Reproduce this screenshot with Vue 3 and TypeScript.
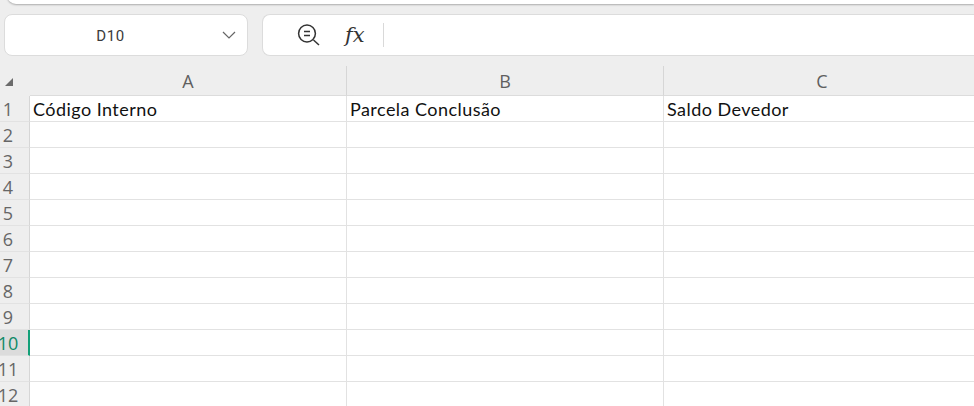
<script setup lang="ts">
const columns = ['A', 'B', 'C']
const headerCells = ['Código Interno', 'Parcela Conclusão', 'Saldo Devedor']
const rows = Array.from({ length: 12 }, (_, i) => i + 1)
const activeRow = 10
</script>

<template>
  <div class="app">
    <div class="ribbon"></div>
    <div class="bar">
      <div class="namebox">
        <span class="ref">D10</span>
        <svg class="chev" width="14" height="8" viewBox="0 0 14 8"><path d="M1 1l6 6 6-6" fill="none" stroke="#666" stroke-width="1.2" /></svg>
      </div>
      <div class="formula">
        <svg class="zoom" width="24" height="24" viewBox="0 0 24 24" fill="none" stroke="#333" stroke-width="1.5">
          <circle cx="10" cy="10.5" r="8.4" />
          <path d="M16.5 17l5.5 5" />
          <path d="M7 8.5h6M7 12.5h6" stroke-width="1.4" />
        </svg>
        <span class="fx">fx</span>
        <span class="sep"></span>
      </div>
    </div>
    <div class="sheet">
      <div class="head">
        <div class="corner">
          <svg class="tri" width="10" height="10" viewBox="0 0 10 10"><path d="M9 1v8H1z" fill="#6b6b6b" /></svg>
        </div>
        <div v-for="c in columns" :key="c" class="colhead">{{ c }}</div>
      </div>
      <div v-for="r in rows" :key="r" class="row">
        <div class="rowhead" :class="{ active: r === activeRow }"><span class="num">{{ r }}</span></div>
        <div v-for="(c, i) in columns" :key="c" class="cell">{{ r === 1 ? headerCells[i] : '' }}</div>
      </div>
    </div>
  </div>
</template>

<style>
html, body { margin: 0; background: #eeeeee; overflow: hidden; }
</style>

<style scoped>
.app {
  width: 974px;
  height: 406px;
  overflow: hidden;
  background: #eeeeee;
  font-family: "Open Sans", "Noto Sans", sans-serif;
}
.ribbon {
  height: 12px;
  margin-top: -8px;
  margin-left: 7px;
  background: #fff;
  border-bottom-left-radius: 9px;
  box-shadow: 0 1px 2px rgba(0, 0, 0, 0.28);
}
.bar {
  display: flex;
  gap: 14px;
  margin-top: 10px;
  padding-left: 4px;
  height: 42px;
}
.namebox, .formula {
  background: #fff;
  border: 1px solid #dcdcdc;
  box-sizing: border-box;
  height: 42px;
  display: flex;
  align-items: center;
}
.namebox {
  width: 244px;
  border-radius: 8px;
  position: relative;
  justify-content: center;
}
.ref {
  font-family: "Roboto", sans-serif;
  font-size: 15px;
  line-height: 20px;
  padding-top: 1px;
  color: #3a3a3a;
  margin-right: 31px;
  letter-spacing: 0.6px;
}
.chev { position: absolute; right: 11px; top: 16px; }
.formula {
  flex: 1;
  border-right: none;
  border-radius: 8px 0 0 8px;
  padding-left: 34px;
}
.zoom { flex: none; }
.fx {
  font-family: "DejaVu Serif", "Liberation Serif", serif;
  font-style: italic;
  font-size: 21px;
  color: #333;
  margin-left: 24px;
  width: 22px;
}
.sep { width: 1px; height: 24px; background: #d9d9d9; margin-left: 16px; }
.sheet { margin-top: 10px; }
.head { display: flex; height: 30px; }
.corner {
  width: 30px;
  box-sizing: border-box;
  padding: 11px 0 0 4px;
  flex: none;
}
.tri { display: block; }
.colhead {
  width: 317px;
  flex: none;
  box-sizing: border-box;
  border-right: 1px solid #d6d6d6;
  border-bottom: 1px solid #dcdcdc;
  text-align: center;
  font-size: 18px;
  line-height: 31px;
  color: #5f5f5f;
}
.row { display: flex; height: 26px; background: #fff; }
.rowhead {
  width: 30px;
  flex: none;
  box-sizing: border-box;
  background: #eeeeee;
  border-right: 1px solid #d6d6d6;
  border-bottom: 1px solid #e2e2e2;
}
.num {
  display: flex;
  justify-content: center;
  width: 16px;
  font-size: 18px;
  line-height: 27px;
  color: #666;
  white-space: nowrap;
}
.rowhead.active {
  background: #dcdcdc;
  border-right: 2px solid #13a078;
}
.rowhead.active .num { color: #0f8a68; }
.cell {
  width: 317px;
  flex: none;
  box-sizing: border-box;
  border-right: 1px solid #e2e2e2;
  border-bottom: 1px solid #e2e2e2;
  padding-left: 3px;
  font-family: "Lato", sans-serif;
  font-size: 18px;
  letter-spacing: 0.45px;
  line-height: 27px;
  color: #111;
  white-space: nowrap;
}
</style>
